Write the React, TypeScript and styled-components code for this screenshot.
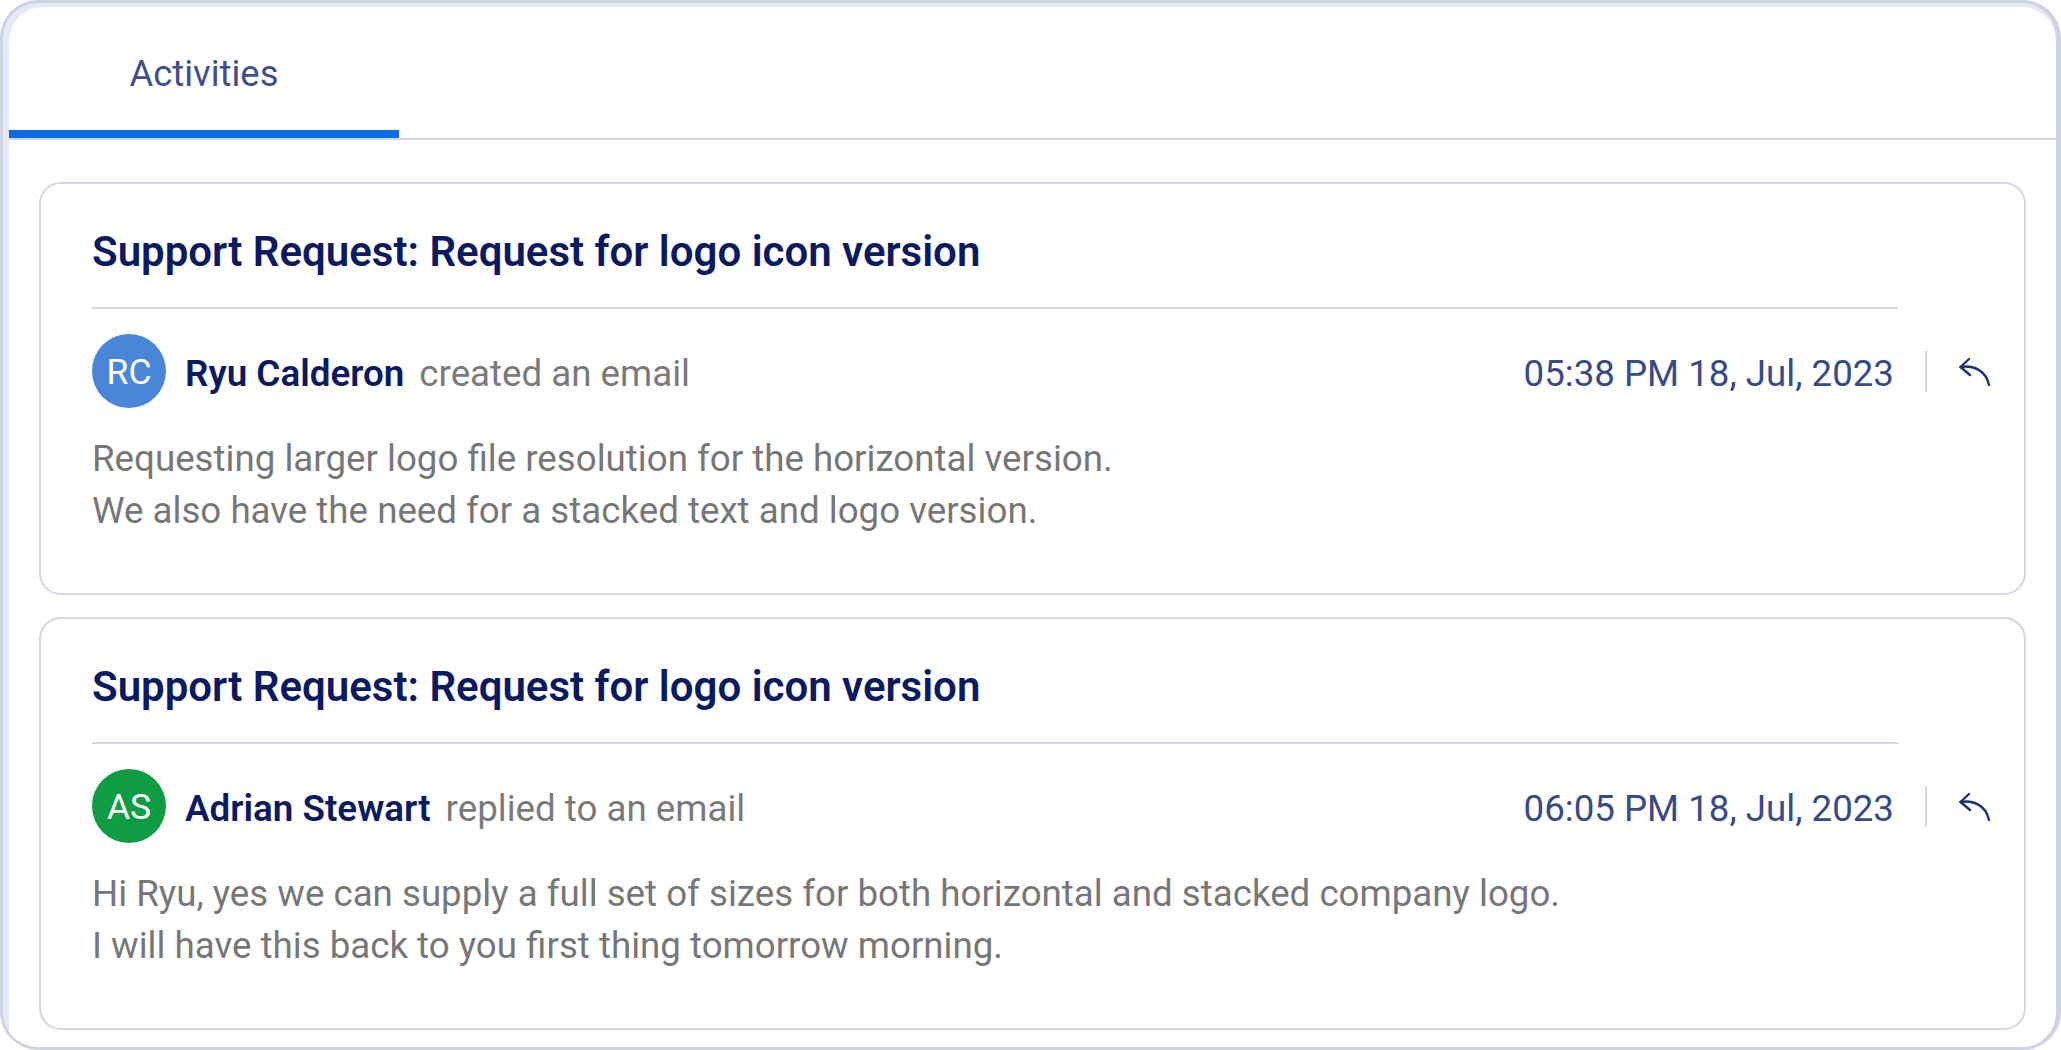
import styled, { createGlobalStyle } from "styled-components";

const GlobalStyle = createGlobalStyle`
  html, body {
    margin: 0;
    padding: 0;
    background: #ffffff;
    font-family: Roboto, "Liberation Sans", sans-serif;
  }
`;

const Frame = styled.div`
  box-sizing: border-box;
  width: 2061px;
  height: 1050px;
  overflow: hidden;
  padding: 4px 0 0 6px;
  background: #e6e8f3;
  border-style: solid;
  border-color: #cfd2e3;
  border-width: 3px 5px 3px 3px;
  border-radius: 38px;
`;

const Panel = styled.div`
  height: 100%;
  background: #ffffff;
  border-radius: 34px 34px 0 0;
`;

const TabBar = styled.div`
  box-sizing: border-box;
  height: 133px;
  display: flex;
  border-bottom: 2px solid #d3d6e6;
`;

const Tab = styled.div`
  box-sizing: border-box;
  width: 390px;
  height: 131px;
  padding-top: 10px;
  display: flex;
  align-items: center;
  justify-content: center;
  border-bottom: 8px solid #0a6ceb;
  color: #3f4f8a;
  font-size: 36.4px;
`;

const Feed = styled.div`
  display: flex;
  flex-direction: column;
  gap: 22px;
  padding: 42px 30px 0 30px;
`;

const Card = styled.section`
  box-sizing: border-box;
  height: 413px;
  padding: 43px 33px 0 51px;
  background: #ffffff;
  border: 2px solid #d3d6e6;
  border-radius: 22px;
`;

const TitleBlock = styled.div`
  margin-right: 93px;
  padding-bottom: 30px;
  border-bottom: 2px solid #d3d6e6;
`;

const Title = styled.h2`
  margin: 0;
  color: #0c1a62;
  font-size: 42px;
  font-weight: 600;
  line-height: 50px;
`;

const Meta = styled.div`
  display: flex;
  align-items: center;
  margin-top: 25px;
`;

const Avatar = styled.div<{ $bg: string }>`
  box-sizing: border-box;
  width: 74px;
  height: 74px;
  padding-top: 1px;
  flex: none;
  display: flex;
  align-items: center;
  justify-content: center;
  border-radius: 50%;
  background: ${(props) => props.$bg};
  color: #ffffff;
  font-size: 35.5px;
  font-weight: 400;
`;

const Name = styled.span`
  margin-left: 19px;
  padding-top: 4px;
  color: #0c1a62;
  font-size: 36.8px;
  font-weight: 600;
`;

const Action = styled.span`
  margin-left: 15px;
  padding-top: 4px;
  color: #7a7a7a;
  font-size: 36.7px;
`;

const Time = styled.span`
  margin-left: auto;
  padding-top: 4px;
  color: #3a4a84;
  font-size: 36.7px;
`;

const Separator = styled.div`
  width: 2px;
  height: 41px;
  margin: 0 32px 0 31px;
  background: #d3d6e6;
`;

const ReplyIcon = styled.svg`
  width: 32px;
  height: 30px;
  flex: none;
`;

const Body = styled.p`
  margin: 25px 0 0;
  color: #777777;
  font-size: 36.7px;
  line-height: 52px;
`;

type Activity = {
  initials: string;
  color: string;
  name: string;
  action: string;
  time: string;
  lines: string[];
};

const activities: Activity[] = [
  {
    initials: "RC",
    color: "#4a86d8",
    name: "Ryu Calderon",
    action: "created an email",
    time: "05:38 PM 18, Jul, 2023",
    lines: [
      "Requesting larger logo file resolution for the horizontal version.",
      "We also have the need for a stacked text and logo version.",
    ],
  },
  {
    initials: "AS",
    color: "#0f9d44",
    name: "Adrian Stewart",
    action: "replied to an email",
    time: "06:05 PM 18, Jul, 2023",
    lines: [
      "Hi Ryu, yes we can supply a full set of sizes for both horizontal and stacked company logo.",
      "I will have this back to you first thing tomorrow morning.",
    ],
  },
];

function App() {
  return (
    <>
      <GlobalStyle />
      <Frame>
        <Panel>
          <TabBar>
            <Tab>Activities</Tab>
          </TabBar>
          <Feed>
            {activities.map((item) => (
              <Card key={item.initials}>
                <TitleBlock>
                  <Title>Support Request: Request for logo icon version</Title>
                </TitleBlock>
                <Meta>
                  <Avatar $bg={item.color}>{item.initials}</Avatar>
                  <Name>{item.name}</Name>
                  <Action>{item.action}</Action>
                  <Time>{item.time}</Time>
                  <Separator />
                  <ReplyIcon viewBox="0 0 32 30" fill="none" stroke="#1f2f73" strokeWidth="2.4" strokeLinecap="round" strokeLinejoin="round">
                    <path d="M10 3 1.5 11 11 19" />
                    <path d="M1.5 11C14 9 27 14 30 29" />
                  </ReplyIcon>
                </Meta>
                <Body>
                  {item.lines[0]}
                  <br />
                  {item.lines[1]}
                </Body>
              </Card>
            ))}
          </Feed>
        </Panel>
      </Frame>
    </>
  );
}

export default App;
